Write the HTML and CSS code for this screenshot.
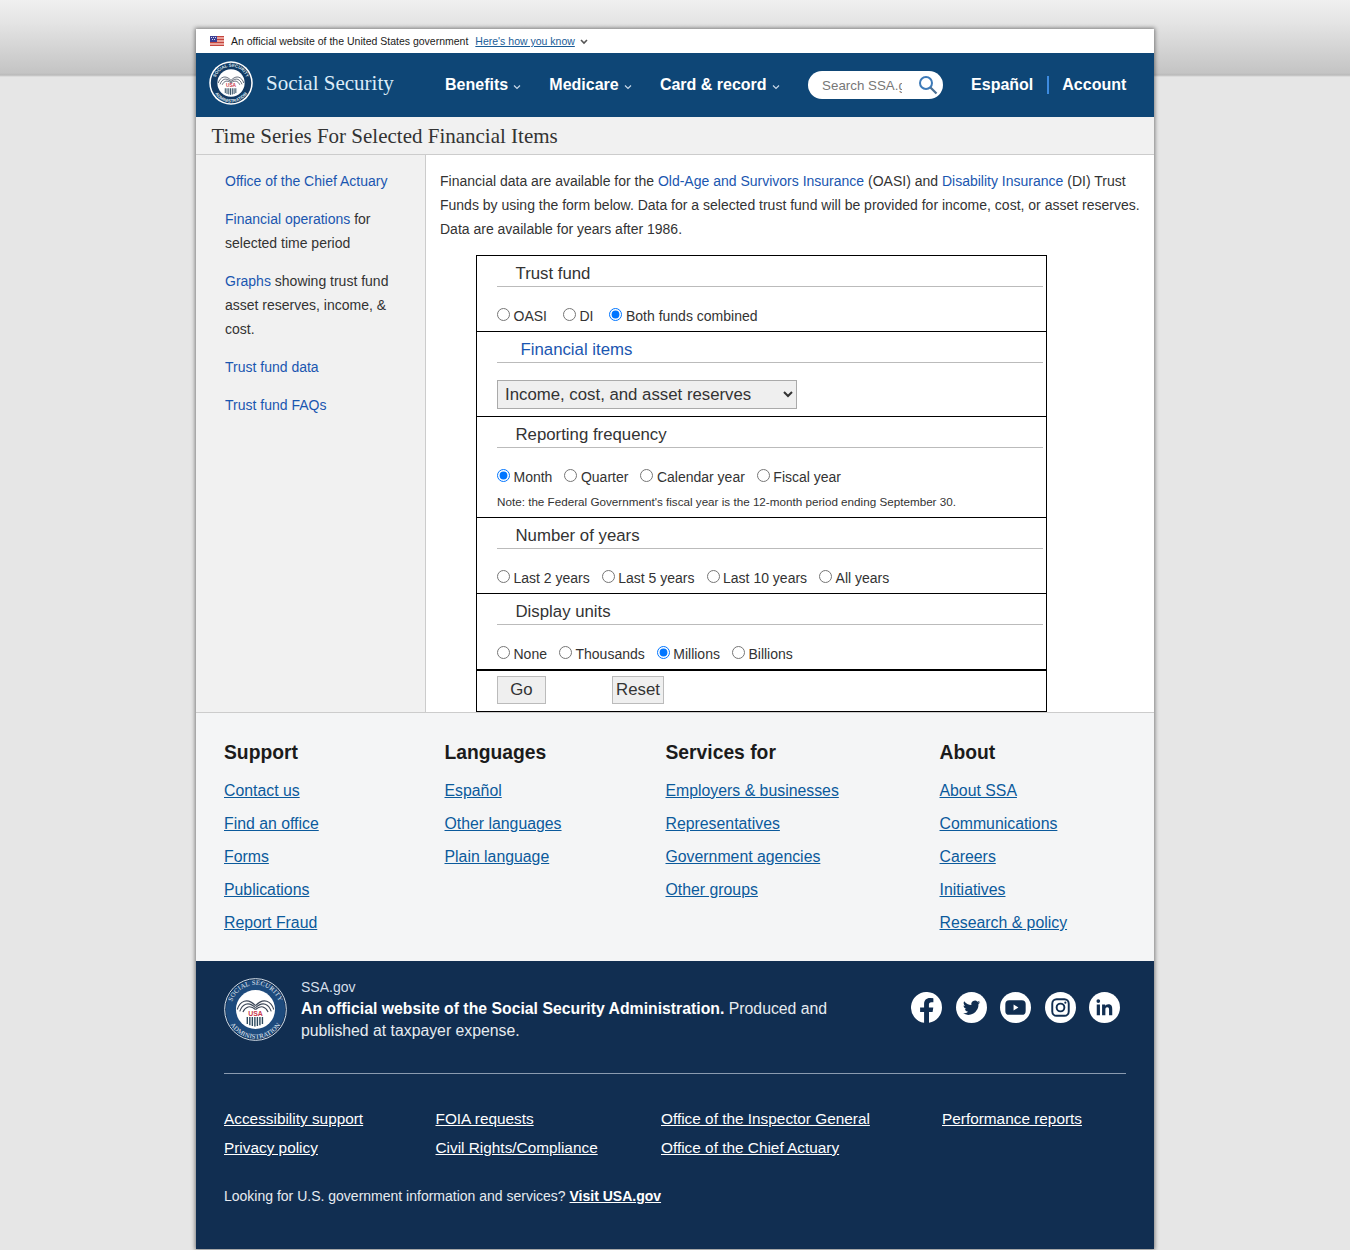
FILE: index.html
```html
<!DOCTYPE html>
<html lang="en">
<head>
<meta charset="utf-8">
<title>Time Series For Selected Financial Items</title>
<link rel="stylesheet" href="styles.css">
</head>
<body>
<svg class="defs" width="0" height="0" aria-hidden="true">
  <defs>
    <g id="eagle">
      <g fill="none" stroke="#3b4657" stroke-width="1.800">
        <path d="M21 50C25 37 37 30 50 44"/>
        <path d="M25 53C29 42 38 36 50 47"/>
        <path d="M30 54C34 46 41 42 50 50"/>
        <path d="M79 50C75 37 63 30 50 44"/>
        <path d="M75 53C71 42 62 36 50 47"/>
        <path d="M70 54C66 46 59 42 50 50"/>
      </g>
      <text class="seal-usa" x="50" y="60" text-anchor="middle">USA</text>
      <path d="M37 62v11M41 62v13M45 62v14M49 62v15M53 62v14M57 62v13M61 62v11" fill="none" stroke="#2c4a5e" stroke-width="2.200"/>
    </g>
  </defs>
</svg>
<div class="page">
  <div class="gov-banner">
    <svg class="flag" width="14" height="10" viewBox="0 0 14 10"><rect width="14" height="10" fill="#e8a19a"/><path d="M0 0h14v1H0zM0 3h14v1H0zM0 6h14v1H0zM0 9h14v1H0z" fill="#c4453e"/><rect width="7" height="6" fill="#3b3f94"/><path d="M1 1h1v1H1zM3 1h1v1H3zM5 1h1v1H5zM2 3h1v1H2zM4 3h1v1H4z" fill="#d8d8ee"/></svg>
    <span class="gov-text">An official website of the United States government</span>
    <a class="gov-link" href="#">Here's how you know</a>
    <svg class="gov-chev" width="8" height="6" viewBox="0 0 8 6"><path d="M1 1l3 3 3-3" fill="none" stroke="#555" stroke-width="1.600"/></svg>
  </div>
  <header class="masthead">
    <a class="brand" href="#">
      <svg class="seal-small" width="44" height="44" viewBox="0 0 100 100">
        <circle cx="50" cy="50" r="49.500" fill="#fff"/><circle cx="50" cy="50" r="46" fill="#123a63"/><circle cx="50" cy="50" r="31" fill="#fff"/>
        <use href="#eagle"/>
        <path id="sealArcA" d="M13 50a37 37 0 1 1 74 0" fill="none"/>
        <path id="sealArcD" d="M6 50a44 44 0 0 0 88 0" fill="none"/>
        <text class="seal-text-small"><textPath href="#sealArcA" startOffset="50%" text-anchor="middle">SOCIAL SECURITY</textPath></text>
        <text class="seal-text-small"><textPath href="#sealArcD" startOffset="50%" text-anchor="middle">ADMINISTRATION</textPath></text>
      </svg>
      <span class="brand-name">Social Security</span>
    </a>
    <nav class="mainnav">
      <a href="#">Benefits<svg width="8" height="6" viewBox="0 0 8 6"><path d="M1 1.500l3 3 3-3" fill="none" stroke="#c8d8e8" stroke-width="1.200"/></svg></a>
      <a href="#">Medicare<svg width="8" height="6" viewBox="0 0 8 6"><path d="M1 1.500l3 3 3-3" fill="none" stroke="#c8d8e8" stroke-width="1.200"/></svg></a>
      <a href="#">Card &amp; record<svg width="8" height="6" viewBox="0 0 8 6"><path d="M1 1.500l3 3 3-3" fill="none" stroke="#c8d8e8" stroke-width="1.200"/></svg></a>
    </nav>
    <div class="search">
      <input class="search-input" type="text" placeholder="Search SSA.gov" aria-label="Search">
      <svg width="20" height="20" viewBox="0 0 20 20"><circle cx="8" cy="8" r="6" fill="none" stroke="#3d7ab8" stroke-width="2"/><path d="M12.500 12.500l6 6" stroke="#4a6f93" stroke-width="2.200"/></svg>
    </div>
    <div class="utility">
      <a href="#">Español</a><span class="pipe"></span><a href="#">Account</a>
    </div>
  </header>
  <h1 class="page-title">Time Series For Selected Financial Items</h1>
  <div class="content">
    <aside class="sidebar">
      <p><a href="#">Office of the Chief Actuary</a></p>
      <p><a href="#">Financial operations</a> for selected time period</p>
      <p><a href="#">Graphs</a> showing trust fund asset reserves, income, &amp; cost.</p>
      <p><a href="#">Trust fund data</a></p>
      <p><a href="#">Trust fund FAQs</a></p>
    </aside>
    <main class="main">
      <p class="intro">Financial data are available for the <a href="#">Old-Age and Survivors Insurance</a> (OASI) and <a href="#">Disability Insurance</a> (DI) Trust Funds by using the form below. Data for a selected trust fund will be provided for income, cost, or asset reserves. Data are available for years after 1986.</p>
      <form class="form-box">
        <section class="group g-trust">
          <h2 class="legend">Trust fund</h2>
          <div class="radios radios-wide">
            <label><input type="radio" name="fund">OASI</label>
            <label><input type="radio" name="fund">DI</label>
            <label><input type="radio" name="fund" checked>Both funds combined</label>
          </div>
        </section>
        <section class="group g-items">
          <h2 class="legend legend-link"><a href="#">Financial items</a></h2>
          <select class="select"><option>Income, cost, and asset reserves</option></select>
        </section>
        <section class="group g-freq">
          <h2 class="legend">Reporting frequency</h2>
          <div class="radios">
            <label><input type="radio" name="freq" checked>Month</label>
            <label><input type="radio" name="freq">Quarter</label>
            <label><input type="radio" name="freq">Calendar year</label>
            <label><input type="radio" name="freq">Fiscal year</label>
          </div>
          <p class="note">Note: the Federal Government's fiscal year is the 12-month period ending September 30.</p>
        </section>
        <section class="group g-years">
          <h2 class="legend">Number of years</h2>
          <div class="radios">
            <label><input type="radio" name="years">Last 2 years</label>
            <label><input type="radio" name="years">Last 5 years</label>
            <label><input type="radio" name="years">Last 10 years</label>
            <label><input type="radio" name="years">All years</label>
          </div>
        </section>
        <section class="group g-units">
          <h2 class="legend">Display units</h2>
          <div class="radios">
            <label><input type="radio" name="units">None</label>
            <label><input type="radio" name="units">Thousands</label>
            <label><input type="radio" name="units" checked>Millions</label>
            <label><input type="radio" name="units">Billions</label>
          </div>
        </section>
        <div class="actions">
          <button class="btn btn-go" type="button">Go</button>
          <button class="btn btn-reset" type="button">Reset</button>
        </div>
      </form>
    </main>
  </div>
  <section class="footer-nav">
    <div class="fcol"><h3>Support</h3><a href="#">Contact us</a><a href="#">Find an office</a><a href="#">Forms</a><a href="#">Publications</a><a href="#">Report Fraud</a></div>
    <div class="fcol"><h3>Languages</h3><a href="#">Español</a><a href="#">Other languages</a><a href="#">Plain language</a></div>
    <div class="fcol"><h3>Services for</h3><a href="#">Employers &amp; businesses</a><a href="#">Representatives</a><a href="#">Government agencies</a><a href="#">Other groups</a></div>
    <div class="fcol"><h3>About</h3><a href="#">About SSA</a><a href="#">Communications</a><a href="#">Careers</a><a href="#">Initiatives</a><a href="#">Research &amp; policy</a></div>
  </section>
  <footer class="dark">
    <div class="dark-top">
      <svg class="seal-large" width="63" height="63" viewBox="0 0 100 100">
        <circle cx="50" cy="50" r="49" fill="none" stroke="#dfe8f0" stroke-width="1.500"/>
        <circle cx="50" cy="50" r="47" fill="#1d4a7c"/>
        <circle cx="50" cy="50" r="31" fill="#fff"/>
        <use href="#eagle"/>
        <path id="sealArcB" d="M11 50a39 39 0 1 1 78 0" fill="none"/>
        <path id="sealArcC" d="M3.500 50a46.500 46.500 0 0 0 93 0" fill="none"/>
        <text class="seal-text"><textPath href="#sealArcB" startOffset="50%" text-anchor="middle">SOCIAL SECURITY</textPath></text>
        <text class="seal-text"><textPath href="#sealArcC" startOffset="50%" text-anchor="middle">ADMINISTRATION</textPath></text>
      </svg>
      <div class="dark-text">
        <div class="dark-site">SSA.gov</div>
        <p><strong>An official website of the Social Security Administration.</strong> Produced and published at taxpayer expense.</p>
      </div>
      <div class="social">
        <a href="#" aria-label="Facebook"><svg width="31" height="31" viewBox="0 0 32 32"><path d="M32 16a16 16 0 1 0-18.500 15.800V20.600H9.400V16h4.100v-3.500c0-4 2.400-6.200 6-6.200 1.800 0 3.600.3 3.600.3v3.900h-2c-2 0-2.600 1.200-2.600 2.500v3H23l-.7 4.600h-3.700v11.200A16 16 0 0 0 32 16z" fill="#fff"/></svg></a>
        <a href="#" aria-label="Twitter"><svg width="31" height="31" viewBox="0 0 32 32"><circle cx="16" cy="16" r="16" fill="#fff"/><path d="M25 10.500c-.7.300-1.400.5-2.100.6.800-.5 1.300-1.200 1.600-2-.7.400-1.500.7-2.300.9a3.700 3.700 0 0 0-6.300 3.400c-3-.2-5.700-1.600-7.500-3.900-1 1.700-.5 3.800 1.100 4.900-.6 0-1.200-.2-1.700-.5 0 1.800 1.300 3.300 3 3.700-.5.100-1.100.2-1.700.1.500 1.500 1.900 2.500 3.500 2.600A7.500 7.500 0 0 1 7 21.800a10.500 10.500 0 0 0 16.200-9.300c.7-.5 1.300-1.200 1.800-2z" fill="#112e51"/></svg></a>
        <a href="#" aria-label="YouTube"><svg width="31" height="31" viewBox="0 0 32 32"><circle cx="16" cy="16" r="16" fill="#fff"/><rect x="5.500" y="8.500" width="21" height="15" rx="4" fill="#112e51"/><path d="M14 13l5 3-5 3z" fill="#fff"/></svg></a>
        <a href="#" aria-label="Instagram"><svg width="31" height="31" viewBox="0 0 32 32"><circle cx="16" cy="16" r="16" fill="#fff"/><rect x="7.500" y="7.500" width="17" height="17" rx="4.500" fill="none" stroke="#112e51" stroke-width="2"/><circle cx="16" cy="16" r="4" fill="none" stroke="#112e51" stroke-width="2"/><circle cx="21" cy="11" r="1.100" fill="#112e51"/></svg></a>
        <a href="#" aria-label="LinkedIn"><svg width="31" height="31" viewBox="0 0 32 32"><circle cx="16" cy="16" r="16" fill="#fff"/><path d="M8 13h3.300v11H8zM9.600 7.500a1.900 1.900 0 1 1 0 3.800 1.900 1.900 0 0 1 0-3.800zM13.500 13h3.200v1.500c.5-.9 1.600-1.800 3.300-1.800 3.400 0 4 2.200 4 5.200V24h-3.300v-5.400c0-1.300 0-2.900-1.800-2.900s-2 1.400-2 2.800V24h-3.400z" fill="#112e51"/></svg></a>
      </div>
    </div>
    <div class="dark-links">
      <a href="#">Accessibility support</a><a href="#">FOIA requests</a><a href="#">Office of the Inspector General</a><a href="#">Performance reports</a>
      <a href="#">Privacy policy</a><a href="#">Civil Rights/Compliance</a><a href="#">Office of the Chief Actuary</a>
    </div>
    <p class="usagov">Looking for U.S. government information and services? <a href="#">Visit USA.gov</a></p>
  </footer>
</div>
</body>
</html>
```
FILE: styles.css
```css
html, body { margin: 0; padding: 0; }
html { height: 100%; }
body {
  font-family: "Liberation Sans", Arial, sans-serif;
  font-size: 14px;
  color: #333;
  background-color: #e6e6e6;
  background-image: linear-gradient(#f0f0f0 0, #e6e6e6 20px, #c4c4c4 73px, #bababa 75px, #e6e6e6 77px);
  background-repeat: no-repeat;
  background-size: 100% 77px;
  height: 1250px;
  overflow: hidden;
}
.defs { position: absolute; }
.page {
  width: 958px;
  margin: 29px auto 0;
  background: #fff;
  box-shadow: 0 0 4px 1px rgba(0, 0, 0, .45);
}
a { color: #1a56b0; text-decoration: none; }

.gov-banner {
  height: 24px;
  display: flex;
  align-items: center;
  padding-left: 14px;
  background: #fff;
  font-size: 10.500px;
  color: #1b1b1b;
}
.flag { margin-right: 7px; }
.gov-link { margin-left: 7px; color: #1a5c97; text-decoration: underline; }
.gov-chev { margin-left: 5px; margin-top: 2px; }

.masthead {
  height: 64px;
  display: flex;
  align-items: center;
  background: #0e4676;
  color: #fff;
}
.brand { display: flex; align-items: center; margin-left: 13px; width: 236px; margin-top: -4px; }
.seal-small { flex: none; }
.seal-text-small { font: bold 10px "Liberation Sans", sans-serif; fill: #dfe8f0; }
.seal-usa { font: bold 11px "Liberation Sans", sans-serif; fill: #c8354a; }
.brand-name { margin-left: 13px; font: 21px "Liberation Serif", serif; color: #dcecf8; }
.mainnav { display: flex; gap: 28.200px; }
.mainnav a { color: #fff; font-size: 16px; font-weight: bold; }
.mainnav svg { margin-left: 5px; }
.search {
  margin-left: 28.500px;
  width: 135px;
  height: 28px;
  border-radius: 14px;
  background: #fff;
  display: flex;
  align-items: center;
}
.search-input {
  border: 0;
  outline: 0;
  padding: 0;
  margin-left: 14px;
  width: 80px;
  font: 13.333px "Liberation Sans", sans-serif;
  background: transparent;
}
.search-input::placeholder { color: #777; opacity: 1; }
.search svg { margin-left: 16px; }
.utility { display: flex; align-items: center; margin-left: 28px; }
.utility a { color: #fff; font-size: 16px; font-weight: bold; }
.pipe { width: 2px; height: 18px; background: #3d8be0; margin: 0 14px 0 14px; }
.pipe + a { margin-left: -1px; }

.page-title {
  margin: 0;
  height: 37px;
  padding-left: 15.500px;
  font: 400 21px/38px "Liberation Serif", serif;
  color: #333;
  background: #f1f1f1;
  border-bottom: 1px solid #ccc;
}

.content { display: flex; height: 557px; border-bottom: 1px solid #ccc; }
.sidebar {
  flex: none;
  width: 229px;
  background: #f1f1f1;
  border-right: 1px solid #ccc;
}
.sidebar p { margin: 0 0 14px; padding: 0 29px; line-height: 24px; color: #333; }
.sidebar p:first-child { margin-top: 14px; }
.main { flex: 1; padding: 14px 10px 0 14px; min-width: 0; }
.intro { margin: 0 0 14px; line-height: 24px; }

.form-box {
  width: 571px;
  box-sizing: border-box;
  margin-left: 36px;
  border: 1px solid #000;
  height: 457px;
  display: flex;
  flex-direction: column;
}
.group { padding: 0 3px 0 20px; border-bottom: 1px solid #000; box-sizing: border-box; }
.g-trust { height: 76px; }
.g-items { height: 85px; }
.g-freq { height: 101px; }
.g-years { height: 76px; }
.g-units { height: 77px; border-bottom-width: 2px; }
.legend {
  margin: 0;
  height: 30px;
  padding-left: 18.500px;
  font: 400 16.800px/35px "Liberation Sans", sans-serif;
  color: #333;
  border-bottom: 1px solid #bbb;
}
.legend-link { padding-left: 23.500px; }
.legend-link a { color: #1a56b0; }
.radios { display: flex; gap: 12px; margin-top: 19px; line-height: 20px; height: 20px; }
.radios-wide { gap: 16px; }
.radios label { display: flex; align-items: center; }
.radios input { margin: 0 3.500px 4px 0; width: 13px; height: 13px; }
.note { margin: 7px 0 0; font-size: 11.680px; line-height: 16px; color: #333; }
.select {
  display: block;
  margin-top: 17px;
  width: 300px;
  height: 29px;
  padding: 0 3px;
  font: 16.800px "Liberation Sans", sans-serif;
  color: #333;
  background: #efefef;
  border: 1px solid #aaa;
}
.actions { display: flex; padding: 5px 0 0 20px; }
.btn {
  box-sizing: border-box;
  height: 28px;
  padding: 0;
  font: 16.800px "Liberation Sans", sans-serif;
  color: #333;
  background: #efefef;
  border: 1px solid #bbb;
}
.btn-go { width: 49px; }
.btn-reset { width: 52px; margin-left: 66px; }

.footer-nav {
  height: 248px;
  box-sizing: border-box;
  padding: 28px 28px 0;
  background: #f4f5f6;
  display: grid;
  grid-template-columns: 220.500px 221px 274px 1fr;
}
.fcol { display: flex; flex-direction: column; align-items: flex-start; }
.fcol h3 { margin: 0 0 18px; font-size: 19.300px; line-height: 23px; color: #1b1b1b; }
.fcol a { font-size: 15.840px; line-height: 18px; margin-bottom: 15px; color: #0b5a9c; text-decoration: underline; }

.dark { height: 288px; box-sizing: border-box; padding: 17px 28px 0; background: #112e51; color: #fff; }
.dark-top { display: flex; height: 95px; border-bottom: 1px solid #8b9bb0; }
.seal-large { flex: none; }
.seal-text { font: 10.500px "Liberation Serif", serif; fill: #e8eef5; letter-spacing: .4px; }
.dark-text { width: 545px; margin-left: 14px; }
.dark-site { font-size: 14px; line-height: 18px; color: #d5dfe9; }
.dark-text p { margin: 2px 0 0; font-size: 15.800px; line-height: 22px; color: #e6ebf0; }
.dark-text strong { color: #fff; }
.social { display: flex; gap: 13.600px; margin-left: 65px; padding-top: 14px; }
.social a { display: block; width: 31px; height: 31px; }
.social svg { display: block; }
.dark-links {
  display: grid;
  grid-template-columns: 211.500px 225.500px 281px 1fr;
  grid-auto-rows: 29px;
  margin-top: 36px;
  font-size: 15.360px;
  line-height: 18px;
}
.dark-links a { color: #fff; text-decoration: underline; justify-self: start; }
.usagov { margin: 19px 0 0; font-size: 14px; line-height: 18px; color: #e6ebf0; }
.usagov a { color: #fff; font-weight: bold; text-decoration: underline; }
```
